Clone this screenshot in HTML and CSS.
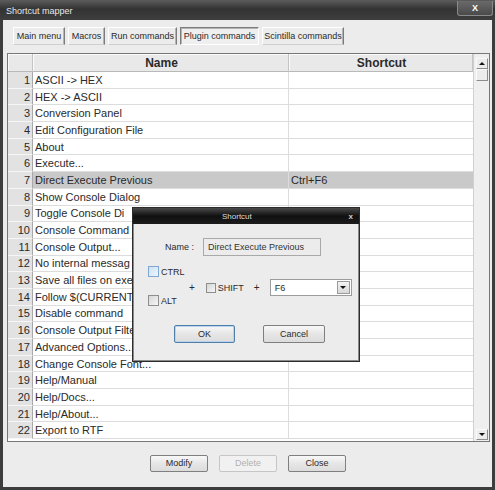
FILE: index.html
```html
<!DOCTYPE html>
<html lang="en">
<head>
    <meta charset="UTF-8">
    <title>Shortcut mapper</title>
    <link rel="stylesheet" href="styles.css">
</head>
<body>
<div class="window">
    <div class="titlebar">
        <span class="title">Shortcut mapper</span>
        <span class="close-btn">X</span>
    </div>
    <div class="content">
        <div class="tabs">
            <div class="tab tab-main">Main menu</div>
            <div class="tab tab-macros">Macros</div>
            <div class="tab tab-run">Run commands</div>
            <div class="tab tab-plugin selected">Plugin commands</div>
            <div class="tab tab-scintilla">Scintilla commands</div>
        </div>

        <div class="grid">
            <div class="table">
                <div class="row head">
                    <div class="num"></div>
                    <div class="name">Name</div>
                    <div class="key">Shortcut</div>
                </div>
                <div class="row"><div class="num">1</div><div class="name">ASCII -&gt; HEX</div><div class="key"></div></div>
                <div class="row"><div class="num">2</div><div class="name">HEX -&gt; ASCII</div><div class="key"></div></div>
                <div class="row"><div class="num">3</div><div class="name">Conversion Panel</div><div class="key"></div></div>
                <div class="row"><div class="num">4</div><div class="name">Edit Configuration File</div><div class="key"></div></div>
                <div class="row"><div class="num">5</div><div class="name">About</div><div class="key"></div></div>
                <div class="row"><div class="num">6</div><div class="name">Execute...</div><div class="key"></div></div>
                <div class="row current"><div class="num">7</div><div class="name">Direct Execute Previous</div><div class="key">Ctrl+F6</div></div>
                <div class="row"><div class="num">8</div><div class="name">Show Console Dialog</div><div class="key"></div></div>
                <div class="row"><div class="num">9</div><div class="name">Toggle Console Di</div><div class="key"></div></div>
                <div class="row"><div class="num">10</div><div class="name">Console Command</div><div class="key"></div></div>
                <div class="row"><div class="num">11</div><div class="name">Console Output...</div><div class="key"></div></div>
                <div class="row"><div class="num">12</div><div class="name">No internal messag</div><div class="key"></div></div>
                <div class="row"><div class="num">13</div><div class="name">Save all files on exe</div><div class="key"></div></div>
                <div class="row"><div class="num">14</div><div class="name">Follow $(CURRENT</div><div class="key"></div></div>
                <div class="row"><div class="num">15</div><div class="name">Disable command</div><div class="key"></div></div>
                <div class="row"><div class="num">16</div><div class="name">Console Output Filte</div><div class="key"></div></div>
                <div class="row"><div class="num">17</div><div class="name">Advanced Options...</div><div class="key"></div></div>
                <div class="row"><div class="num">18</div><div class="name">Change Console Font...</div><div class="key"></div></div>
                <div class="row"><div class="num">19</div><div class="name">Help/Manual</div><div class="key"></div></div>
                <div class="row"><div class="num">20</div><div class="name">Help/Docs...</div><div class="key"></div></div>
                <div class="row"><div class="num">21</div><div class="name">Help/About...</div><div class="key"></div></div>
                <div class="row"><div class="num">22</div><div class="name">Export to RTF</div><div class="key"></div></div>
            </div>
            <div class="scrollbar">
                <div class="sb-btn"><span class="arrow-up"></span></div>
                <div class="sb-thumb"></div>
                <div class="sb-track"></div>
                <div class="sb-btn"><span class="arrow-down"></span></div>
            </div>
        </div>

        <div class="buttons">
            <div class="btn">Modify</div>
            <div class="btn disabled">Delete</div>
            <div class="btn">Close</div>
        </div>
    </div>

    <!-- modal shortcut editor -->
    <div class="dialog">
        <div class="dlg-title">
            <span class="dlg-caption">Shortcut</span>
            <span class="dlg-x">x</span>
        </div>
        <div class="dlg-body">
            <div class="name-row">
                <span class="label">Name :</span>
                <div class="textbox">Direct Execute Previous</div>
            </div>
            <div class="keys">
                <div class="mods">
                    <label class="check"><span class="box hot"></span>CTRL</label>
                    <label class="check"><span class="box"></span>ALT</label>
                </div>
                <span class="plus plus-first">+</span>
                <label class="check shift"><span class="box"></span>SHIFT</label>
                <span class="plus">+</span>
                <div class="combo">
                    <span class="combo-text">F6</span>
                    <span class="combo-btn"><span class="arrow-down"></span></span>
                </div>
            </div>
            <div class="dlg-buttons">
                <div class="btn default">OK</div>
                <div class="btn">Cancel</div>
            </div>
        </div>
    </div>
</div>
</body>
</html>
```

FILE: styles.css
```css
* {
    box-sizing: border-box;
}
body {
    margin: 0;
    background-color: #3b3b3b;
    font-family: "Liberation Sans", Arial, sans-serif;
    color: #2a2a2a;
}
.window {
    position: relative;
    width: 495px;
    height: 490px;
    display: flex;
    flex-direction: column;
}

/* title bar */
.titlebar {
    height: 20px;
    display: flex;
    align-items: center;
    justify-content: space-between;
    padding: 1px 5px 0 6px;
    background: linear-gradient(#5c5c5c, #333 45%, #3e3e3e);
}
.title {
    font-size: 9px;
    color: #e8e8e8;
}
.close-btn {
    width: 36px;
    height: 15px;
    margin-top: -4px;
    margin-right: -3px;
    border: 1px solid #8a8a8a;
    border-top: 0;
    border-radius: 0 0 3px 3px;
    background: linear-gradient(#6a6a6a, #4a4a4a);
    color: #fff;
    font-size: 9px;
    font-weight: bold;
    text-align: center;
    line-height: 14px;
}

.content {
    flex: 1;
    background-color: #ececec;
    border: 3px solid #3d3d3d;
    border-top: 0;
    padding: 7px 2px 0 4px;
}

/* tab buttons */
.tabs {
    display: flex;
    gap: 3px;
    margin-left: 6px;
    height: 18px;
}
.tab {
    font-size: 9px;
    text-align: center;
    line-height: 16px;
    background-color: #ececec;
    border: 1px solid;
    border-color: #fff #7c7c7c #cfcfcf #fff;
    box-shadow: inset -1px 0 #b4b4b4;
}
.tab.selected {
    border-color: #7c7c7c #fff #fff #7c7c7c;
    box-shadow: inset 1px 1px #b4b4b4;
    background-color: #efefef;
}
.tab-main { width: 52px; }
.tab-macros { width: 37px; }
.tab-run { width: 69px; }
.tab-plugin { width: 79px; }
.tab-scintilla { width: 82px; }

/* command list */
.grid {
    margin-top: 8px;
    height: 389px;
    display: flex;
    border: 1px solid #777;
    background-color: #fff;
}
.table {
    width: 465px;
}
.row {
    display: flex;
    height: 16.7px;
    font-size: 11px;
}
.row > div {
    display: flex;
    align-items: center;
    white-space: nowrap;
    overflow: hidden;
    border-bottom: 1px solid #dcdcdc;
}
.num {
    width: 25px;
    justify-content: flex-end;
    padding-right: 2px;
    background-color: #e2e2e2;
    border-right: 1px solid #a8a8a8;
    border-bottom-color: #f6f6f6 !important;
}
.name {
    width: 256px;
    padding-left: 2px;
    border-right: 1px solid #dcdcdc;
}
.key {
    width: 184px;
    padding-left: 2px;
}
.row.current .name,
.row.current .key {
    background-color: #c9c9c9;
}
.row.head {
    height: 18px;
    font-size: 12px;
    font-weight: bold;
}
.row.head > div {
    justify-content: center;
    background-color: #e9e9e9;
    border-bottom: 1px solid #b9b9b9 !important;
    border-right: 1px solid #c4c4c4;
    box-shadow: inset 1px 1px #fafafa;
}

.scrollbar {
    width: 16px;
    display: flex;
    flex-direction: column;
    align-items: center;
    padding: 4px 0 1px;
    background-color: #efefef;
    border-left: 1px solid #d0d0d0;
}
.sb-btn,
.sb-thumb {
    width: 12px;
    height: 11px;
    display: flex;
    align-items: center;
    justify-content: center;
    background-color: #ececec;
    border: 1px solid;
    border-color: #fafafa #8c8c8c #8c8c8c #fafafa;
}
.sb-thumb {
    height: 12px;
}
.sb-track {
    flex: 1;
}
.arrow-up,
.arrow-down {
    width: 0;
    height: 0;
    border-left: 3px solid transparent;
    border-right: 3px solid transparent;
}
.arrow-up {
    border-bottom: 3px solid #111;
}
.arrow-down {
    border-top: 3px solid #111;
}

/* bottom buttons */
.buttons {
    display: flex;
    justify-content: center;
    gap: 11px;
    margin-top: 13px;
    padding-right: 1px;
}
.btn {
    width: 58px;
    height: 17px;
    font-size: 9px;
    line-height: 15px;
    text-align: center;
    border: 1px solid #7f7f7f;
    border-radius: 2px;
    background: linear-gradient(#f8f8f8, #e6e6e6 50%, #dcdcdc);
}
.btn.disabled {
    color: #b2b2b2;
    border-color: #c6c6c6;
    background: #f1f1f1;
}

/* shortcut dialog */
.dialog {
    position: absolute;
    left: 132px;
    top: 207px;
    width: 228px;
    height: 155px;
    border: 1px solid #2c2c2c;
    background-color: #ececec;
    box-shadow: inset 1px 0 #8a8a8a, inset -1px 0 #8a8a8a, inset 0 -1px #8a8a8a;
}
.dlg-title {
    height: 16px;
    display: flex;
    align-items: center;
    justify-content: space-between;
    padding: 0 6px 0 89px;
    background: linear-gradient(#4a4a4a, #101010 50%, #1c1c1c);
}
.dlg-caption {
    font-size: 8px;
    color: #dedede;
}
.dlg-x {
    font-size: 8px;
    font-weight: bold;
    color: #ccc;
}
.dlg-body {
    padding: 14px 0 0 0;
    font-size: 9px;
}
.name-row {
    display: flex;
    align-items: center;
    padding-left: 32px;
}
.textbox {
    margin-left: 9px;
    width: 118px;
    height: 18px;
    line-height: 16px;
    padding-left: 4px;
    border: 1px solid #a9a9a9;
    color: #333;
}
.keys {
    display: flex;
    align-items: center;
    margin-top: 10px;
    padding-left: 15px;
    height: 40px;
}
.mods {
    height: 40px;
    width: 37px;
    display: flex;
    flex-direction: column;
    justify-content: space-between;
}
.check {
    display: flex;
    align-items: center;
    gap: 2px;
}
.box {
    width: 11px;
    height: 11px;
    border: 1px solid #8e8e8e;
    background: linear-gradient(135deg, #d6d6d6, #f6f6f6);
}
.box.hot {
    border-color: #7ea7d2;
    background: linear-gradient(135deg, #cfe1f3, #eef5fc);
}
.keys > .plus,
.keys > .shift,
.keys > .combo {
    margin-top: 3px;
}
.plus {
    margin-left: 10px;
    font-size: 10px;
}
.plus-first {
    margin-left: 4px;
}
.shift {
    margin-left: 11px;
}
.shift .box {
    width: 10px;
    height: 10px;
}
.combo {
    margin-left: 10px;
    width: 82px;
    height: 17px;
    display: flex;
    align-items: center;
    justify-content: space-between;
    padding: 0 1px 0 4px;
    background-color: #fff;
    border: 1px solid #9c9c9c;
}
.combo-btn {
    width: 13px;
    height: 13px;
    display: flex;
    align-items: center;
    justify-content: center;
    border: 1px solid #9a9a9a;
    background: linear-gradient(#f4f4f4, #d8d8d8);
}
.dlg-buttons {
    display: flex;
    gap: 28px;
    margin-top: 19px;
    padding-left: 41px;
}
.dlg-buttons .btn {
    width: 61px;
    height: 18px;
    line-height: 16px;
}
.dlg-buttons .btn + .btn {
    width: 62px;
}
.btn.default {
    border-color: #4f7fa8;
    box-shadow: inset 0 0 0 1px #b9d4ec;
}
```
